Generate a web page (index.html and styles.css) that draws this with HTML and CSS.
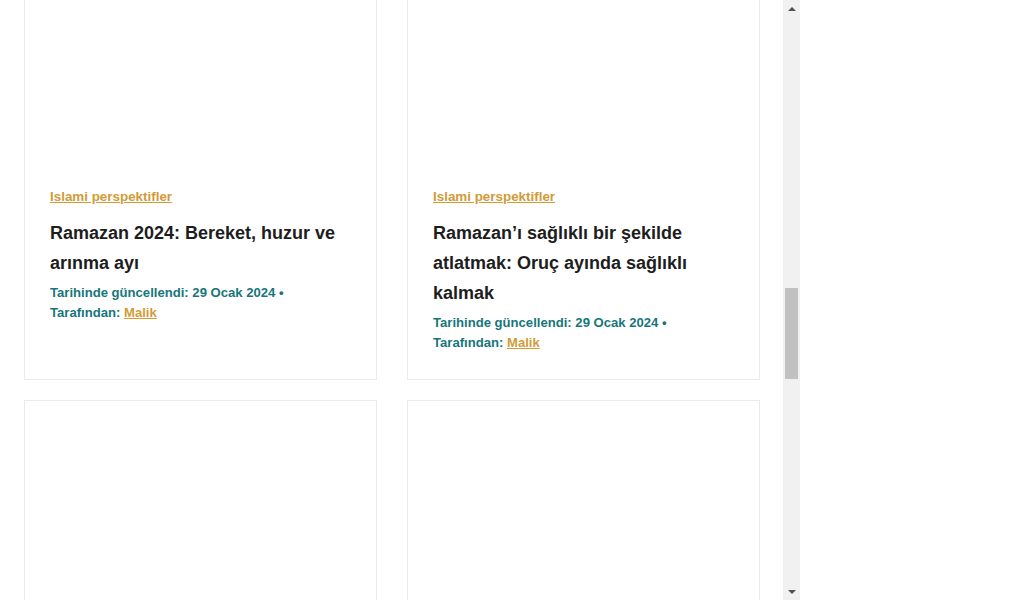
FILE: index.html
```html
<!DOCTYPE html>
<html lang="tr">
<head>
<meta charset="utf-8">
<title>Islami perspektifler</title>
<link rel="stylesheet" href="styles.css">
</head>
<body>
<div class="frame">
  <main class="viewport">
    <div class="grid">
      <article class="card">
        <div class="thumb"></div>
        <a class="cat" href="#">Islami perspektifler</a>
        <h2 class="title">Ramazan 2024: Bereket, huzur ve arınma ayı</h2>
        <p class="meta">Tarihinde güncellendi: 29 Ocak 2024 • Tarafından: <a href="#">Malik</a></p>
      </article>
      <article class="card">
        <div class="thumb"></div>
        <a class="cat" href="#">Islami perspektifler</a>
        <h2 class="title">Ramazan’ı sağlıklı bir şekilde atlatmak: Oruç ayında sağlıklı kalmak</h2>
        <p class="meta">Tarihinde güncellendi: 29 Ocak 2024 • Tarafından: <a href="#">Malik</a></p>
      </article>
      <article class="card">
        <div class="thumb"></div>
      </article>
      <article class="card">
        <div class="thumb"></div>
      </article>
    </div>
  </main>
  <div class="scrollbar">
    <div class="sb-btn"><span class="arrow-up"></span></div>
    <div class="sb-track"><div class="sb-thumb" style="margin-top:271px;height:91px"></div></div>
    <div class="sb-btn"><span class="arrow-down"></span></div>
  </div>
</div>
</body>
</html>
```
FILE: styles.css
```css
html, body {
  margin: 0;
  padding: 0;
  background: #fff;
}
body {
  font-family: "Liberation Sans", Arial, sans-serif;
}
.frame {
  display: flex;
  width: 800px;
  height: 600px;
}
.viewport {
  width: 783px;
  height: 600px;
  overflow: hidden;
}
.grid {
  display: grid;
  grid-template-columns: 353px 353px;
  column-gap: 30px;
  row-gap: 20px;
  padding: 0 23px 0 24px;
  margin-top: -99px;
}
.card {
  border: 1px solid #ebebeb;
  padding: 0 25px 26px;
  display: flex;
  flex-direction: column;
  align-items: flex-start;
}
.thumb {
  height: 285px;
  width: 100%;
}
.cat {
  font-size: 13.4px;
  line-height: 20px;
  font-weight: bold;
  color: #d29b35;
  text-decoration: underline;
}
.title {
  margin: 11px 0 0;
  font-size: 18px;
  line-height: 30px;
  font-weight: bold;
  color: #1d1d1d;
}
.meta {
  margin: 5px 0 0;
  font-size: 13.1px;
  line-height: 20px;
  font-weight: bold;
  color: #17767a;
}
.meta a {
  color: #d29b35;
  text-decoration: underline;
}
.scrollbar {
  width: 17px;
  height: 600px;
  background: #f1f1f1;
  display: flex;
  flex-direction: column;
}
.sb-btn {
  height: 17px;
  display: flex;
  align-items: center;
  justify-content: center;
}
.arrow-up, .arrow-down {
  width: 0;
  height: 0;
  border-left: 4px solid transparent;
  border-right: 4px solid transparent;
}
.arrow-up {
  border-bottom: 4px solid #505050;
}
.arrow-down {
  border-top: 4px solid #505050;
}
.sb-track {
  flex: 1;
  display: flex;
  flex-direction: column;
  align-items: center;
}
.sb-thumb {
  width: 13px;
  background: #c1c1c1;
}
```
